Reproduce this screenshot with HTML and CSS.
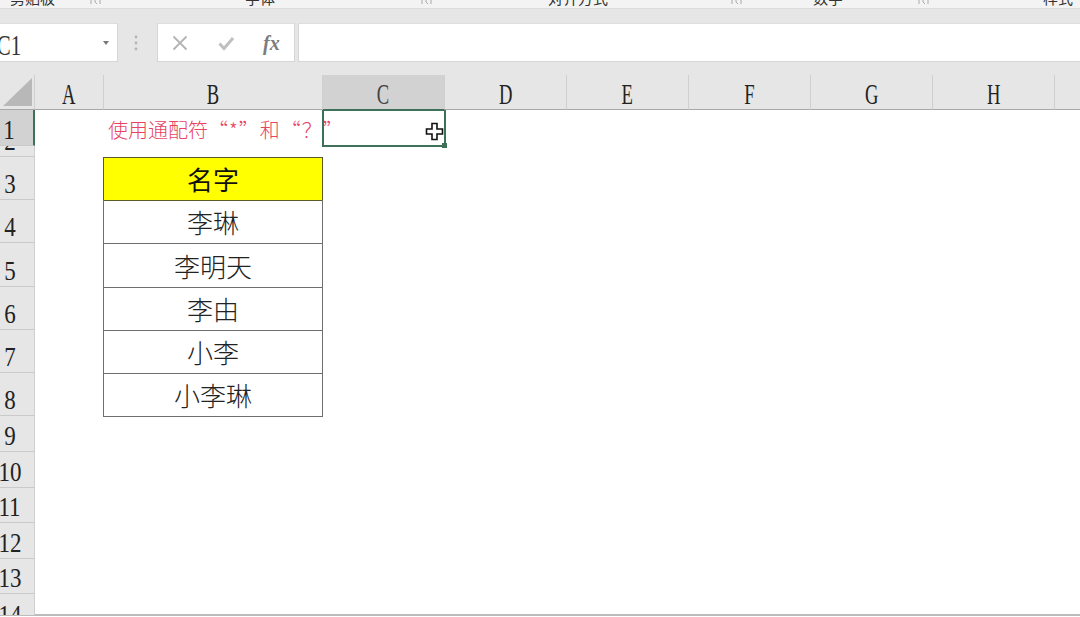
FILE: index.html
```html
<!DOCTYPE html>
<html lang="zh">
<head>
<meta charset="utf-8">
<title>通配符</title>
<link rel="stylesheet" href="styles.css">
</head>
<body>
<div class="ribbon">
  <span class="label l1">剪贴板</span><svg class="launch s1" viewBox="0 0 12 5"><path d="M1 0v4M10 0v4M5 0v2l2 2" /></svg>
  <span class="label l2">字体</span><svg class="launch s2" viewBox="0 0 12 5"><path d="M1 0v4M10 0v4M5 0v2l2 2" /></svg>
  <span class="label l3">对齐方式</span><svg class="launch s3" viewBox="0 0 12 5"><path d="M1 0v4M10 0v4M5 0v2l2 2" /></svg>
  <span class="label l4">数字</span><svg class="launch s4" viewBox="0 0 12 5"><path d="M1 0v4M10 0v4M5 0v2l2 2" /></svg>
  <span class="label l5">样式</span>
</div>
<div class="fbar">
  <div class="box namebox"><span class="cname">C1</span><span class="caret"></span></div>
  <svg class="dots" viewBox="0 0 4 16"><circle cx="2" cy="2" r="1.4"/><circle cx="2" cy="8" r="1.4"/><circle cx="2" cy="14" r="1.4"/></svg>
  <div class="box btns">
    <svg class="ico" viewBox="0 0 16 16"><path class="x" d="M1.5 1.5l13 13M14.5 1.5l-13 13"/></svg>
    <svg class="ico" viewBox="0 0 16 16"><path class="chk" d="M1.5 8.5l4.5 5L15 3"/></svg>
    <span class="fx">fx</span>
  </div>
  <div class="box input"></div>
</div>
<div class="sheet">
  <div class="corner"><svg class="tri" viewBox="0 0 30 29"><path d="M29 0v28H0z"/></svg></div>
  <div class="ch"><span class="let">A</span></div>
  <div class="ch"><span class="let">B</span></div>
  <div class="ch sel"><span class="let">C</span></div>
  <div class="ch"><span class="let">D</span></div>
  <div class="ch"><span class="let">E</span></div>
  <div class="ch"><span class="let">F</span></div>
  <div class="ch"><span class="let">G</span></div>
  <div class="ch"><span class="let">H</span></div>
  <div class="ch end"></div>

  <div class="rh rsel"><span class="num">1</span></div>
  <div class="note">使用通配符<span class="q">“*”和“？”</span></div>
  <div class="active">
    <svg class="cursor" viewBox="0 0 20 20"><path class="cur" d="M7 1.5h5v5.500h5.500v5H12v5.500H7V12H1.500V7H7z"/></svg>
    <span class="handle"></span>
  </div>

  <div class="rh"><span class="num">2</span></div>

  <div class="rh"><span class="num">3</span></div>
  <div class="cell head">名字</div>
  <div class="rh"><span class="num">4</span></div>
  <div class="cell">李琳</div>
  <div class="rh"><span class="num">5</span></div>
  <div class="cell">李明天</div>
  <div class="rh"><span class="num">6</span></div>
  <div class="cell">李由</div>
  <div class="rh"><span class="num">7</span></div>
  <div class="cell">小李</div>
  <div class="rh"><span class="num">8</span></div>
  <div class="cell">小李琳</div>

  <div class="rh"><span class="num">9</span></div>
  <div class="rh"><span class="num">10</span></div>
  <div class="rh"><span class="num">11</span></div>
  <div class="rh"><span class="num">12</span></div>
  <div class="rh"><span class="num">13</span></div>
  <div class="rh last"><span class="num">14</span></div>
</div>
</body>
</html>
```
FILE: styles.css
```css
* { box-sizing: border-box; }
html, body { margin: 0; padding: 0; }
body {
  width: 1080px;
  height: 617px;
  overflow: hidden;
  background: #fff;
  font-family: "Liberation Serif", "Noto Sans CJK SC", serif;
  color: #222;
}

/* ribbon remnant */
.ribbon {
  height: 9px;
  background: #f3f3f3;
  border-bottom: 1px solid #dcdcdc;
  display: flex;
  align-items: flex-end;
  overflow: hidden;
  padding-bottom: 3px;
}
.label {
  font: 15px/15px "Noto Sans CJK SC", sans-serif;
  color: #333;
  flex: none;
}
.launch { width: 12px; height: 5px; flex: none; fill: none; stroke: #aaa; stroke-width: 1; }
.l1 { margin-left: 10px; }
.s1 { margin-left: 35px; }
.l2 { margin-left: 143px; }
.s2 { margin-left: 146px; }
.l3 { margin-left: 115px; }
.s3 { margin-left: 123px; }
.l4 { margin-left: 70px; }
.s4 { margin-left: 75px; }
.l5 { margin-left: 113px; }

/* formula bar */
.fbar {
  height: 66px;
  background: #e6e6e6;
  display: flex;
  align-items: flex-start;
  padding-top: 14px;
}
.box {
  height: 39px;
  background: #fff;
  border: 1px solid #d6d6d6;
  border-top-color: #dedede;
}
.namebox {
  width: 118px;
  border-left: 0;
  display: flex;
  align-items: center;
  position: relative;
  overflow: hidden;
}
.cname {
  font-size: 29px;
  line-height: 26px;
  color: #333;
  margin-left: -8px;
  display: inline-block;
  transform: scaleX(.72);
  padding-top: 5px;
}
.caret {
  width: 0;
  height: 0;
  border-left: 3px solid transparent;
  border-right: 3px solid transparent;
  border-top: 4px solid #777;
  margin-left: auto;
  margin-right: 8px;
}
.dots { width: 4px; height: 16px; margin: 12px 19px 0 16px; fill: #b4b4b4; flex: none; }
.btns {
  width: 138px;
  display: flex;
  align-items: center;
  padding-left: 14px;
  gap: 30px;
}
.ico { width: 16px; height: 16px; flex: none; fill: none; }
.x { stroke: #b4b4b4; stroke-width: 1.8; }
.chk { stroke: #c0c0c0; stroke-width: 3; }
.fx {
  font: italic bold 20px/20px "Liberation Serif", serif;
  color: #7c7c7c;
  margin-left: -1px;
}
.input { flex: 1; margin-left: 3px; border-right: 0; }

/* sheet */
.sheet {
  margin-left: -15px;
  display: grid;
  grid-template-columns: 50px 69px 219px 122px 122px 122px 122px 122px 122px 25px;
  grid-template-rows: 35px 36px 11px 43px 43px 44px 43px 43px 43px 36px 36px 35px 36px 35px 21px;
  height: 541px;
  border-bottom: 2px solid #bcbcbc;
  position: relative;
}
.corner {
  background: #e6e6e6;
  border-bottom: 1px solid #a8a8a8;
  border-right: 1px solid #cfcfcf;
  display: flex;
  justify-content: flex-end;
  align-items: flex-end;
  padding: 0 1px 1px 0;
}
.tri { width: 30px; height: 29px; fill: #b8b8b8; margin-bottom: 1px; }
.ch {
  background: #e6e6e6;
  border-bottom: 1px solid #a8a8a8;
  border-right: 1px solid #cfcfcf;
  display: flex;
  justify-content: center;
  align-items: flex-end;
  padding-bottom: 4px;
  overflow: hidden;
}
.ch.sel { background: #d2d2d2; border-bottom-color: #3f7058; color: #444; }
.ch.end { border-right: 0; }
.let {
  display: inline-block;
  font-size: 30px;
  line-height: 22px;
  transform: scaleX(.62);
}
.rh {
  grid-column: 1;
  background: #e6e6e6;
  border-bottom: 1px solid #cacaca;
  border-right: 1px solid #cfcfcf;
  display: flex;
  justify-content: center;
  align-items: flex-end;
  padding-bottom: 5px;
  overflow: hidden;
}
.rh.rsel { background: #d2d2d2; border-right: 2px solid #3f7058; }
.rh.last { padding-bottom: 0; border-bottom: 0; }
.rh.last .num { margin-bottom: -10px; }
.num {
  display: inline-block;
  font-size: 28px;
  line-height: 20px;
  transform: scaleX(.82);
  flex: none;
}
.note {
  grid-column: 3;
  padding-left: 4px;
  font: 300 20px/40px "Noto Sans CJK SC", sans-serif;
  color: #e8435f;
  white-space: nowrap;
}
.q { letter-spacing: 1px; }
.active {
  grid-column: 4;
  border: 2px solid #3f7058;
  border-top-width: 1px;
  margin: 0 -1px -1px -1px;
  position: relative;
}
.cursor { position: absolute; right: -1px; top: 11px; width: 20px; height: 20px; }
.cur { fill: #fff; stroke: #111; stroke-width: 1.6; }
.handle {
  position: absolute;
  right: -3px;
  bottom: -3px;
  width: 5px;
  height: 5px;
  background: #3f7058;
}
.cell {
  grid-column: 3;
  border: 1px solid #6e6e6e;
  border-top: 0;
  margin: 0 0 -1px -1px;
  display: flex;
  justify-content: center;
  align-items: center;
  font: 300 26px/26px "Noto Sans CJK SC", sans-serif;
  color: #222;
  padding-top: 1px;
}
.cell.head {
  background: #ff0;
  border-top: 1px solid #5a5a2a;
  border-color: #5a5a2a;
  color: #111;
  font-weight: 400;
  padding-top: 0;
}
```
